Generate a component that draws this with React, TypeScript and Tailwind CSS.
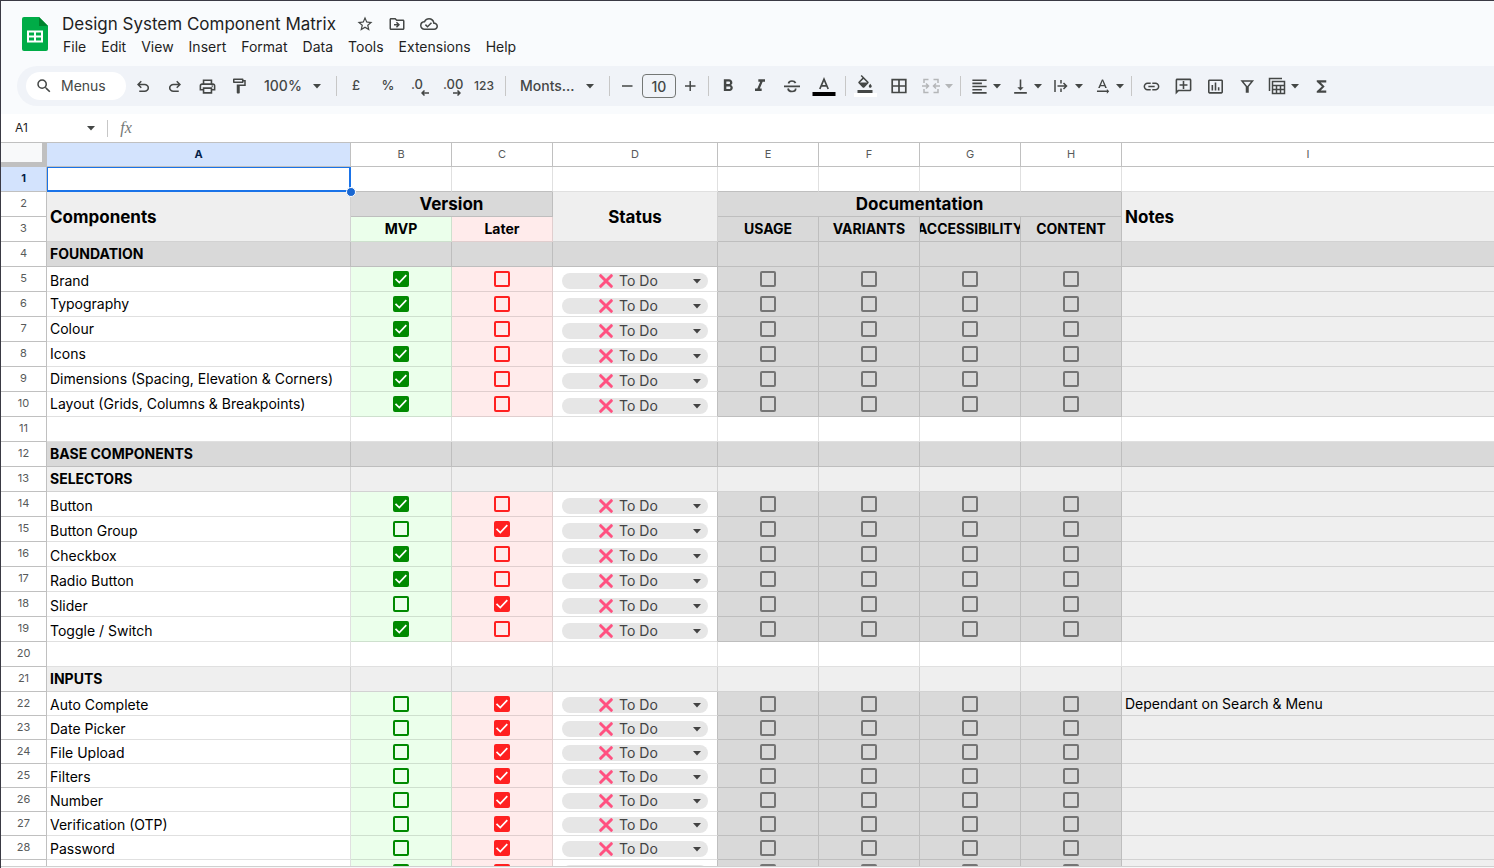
import type { ReactNode } from 'react';
import clsx from 'clsx';
import {
  MdFormatAlignLeft,
  MdFormatBold,
  MdFormatColorFill,
  MdFormatItalic,
  MdFunctions,
  MdInsertChartOutlined,
  MdLink,
  MdOutlineAddComment,
  MdOutlineCloudDone,
  MdOutlineDriveFileMove,
  MdOutlineFormatPaint,
  MdOutlinePrint,
  MdSearch,
  MdStarBorder,
  MdTextRotationNone,
  MdVerticalAlignBottom,
} from 'react-icons/md';

const MENUS = ['File', 'Edit', 'View', 'Insert', 'Format', 'Data', 'Tools', 'Extensions', 'Help'];
const COLUMNS = ['A', 'B', 'C', 'D', 'E', 'F', 'G', 'H', 'I'];
const DOC_COLUMNS = ['USAGE', 'VARIANTS', 'ACCESSIBILITY', 'CONTENT'];

type Row =
  | { kind: 'blank' }
  | { kind: 'section' | 'group'; name: string }
  | { kind: 'item'; name: string; version: 'mvp' | 'later'; middle?: boolean; short?: boolean; note?: string };

// sheet rows 4 and down
const ROWS: Row[] = [
  { kind: 'section', name: 'FOUNDATION' },
  { kind: 'item', name: 'Brand', version: 'mvp' },
  { kind: 'item', name: 'Typography', version: 'mvp', middle: true },
  { kind: 'item', name: 'Colour', version: 'mvp', middle: true },
  { kind: 'item', name: 'Icons', version: 'mvp', middle: true },
  { kind: 'item', name: 'Dimensions (Spacing, Elevation & Corners)', version: 'mvp', middle: true },
  { kind: 'item', name: 'Layout (Grids, Columns & Breakpoints)', version: 'mvp', middle: true },
  { kind: 'blank' },
  { kind: 'section', name: 'BASE COMPONENTS' },
  { kind: 'group', name: 'SELECTORS' },
  { kind: 'item', name: 'Button', version: 'mvp' },
  { kind: 'item', name: 'Button Group', version: 'later' },
  { kind: 'item', name: 'Checkbox', version: 'mvp' },
  { kind: 'item', name: 'Radio Button', version: 'mvp' },
  { kind: 'item', name: 'Slider', version: 'later' },
  { kind: 'item', name: 'Toggle / Switch', version: 'mvp' },
  { kind: 'blank' },
  { kind: 'group', name: 'INPUTS' },
  { kind: 'item', name: 'Auto Complete', version: 'later', short: true, note: 'Dependant on Search & Menu' },
  { kind: 'item', name: 'Date Picker', version: 'later', short: true },
  { kind: 'item', name: 'File Upload', version: 'later', short: true },
  { kind: 'item', name: 'Filters', version: 'later', short: true },
  { kind: 'item', name: 'Number', version: 'later', short: true },
  { kind: 'item', name: 'Verification (OTP)', version: 'later', short: true },
  { kind: 'item', name: 'Password', version: 'later', short: true },
  { kind: 'item', name: '', version: 'later', short: true },
];

const CELL = 'border-r border-b border-black/12 p-0';

function Caret({ className }: { className?: string }) {
  return (
    <svg width="10" height="5" viewBox="0 0 10 5" className={clsx('shrink-0', className)}>
      <path d="M1 0h8L5 4.5z" fill="currentColor" />
    </svg>
  );
}

function SheetsLogo() {
  return (
    <svg width="26" height="34" viewBox="0 0 26 34" className="shrink-0">
      <path d="M2 0h15l9 9v23a2 2 0 0 1-2 2H2a2 2 0 0 1-2-2V2a2 2 0 0 1 2-2z" fill="#00ac47" />
      <path d="M17 0l9 9h-9z" fill="#00832d" />
      <path d="M5 13.500h16v12H5zM7 15.500v3h5v-3zm7 0v3h5v-3zm-7 5v3h5v-3zm7 0v3h5v-3z" fill="#fff" fillRule="evenodd" />
    </svg>
  );
}

function SymbolIcon({ d }: { d: string }) {
  return (
    <svg width="18" height="18" viewBox="0 -1000 960 960" fill="currentColor">
      <path d={d} />
    </svg>
  );
}

function LineIcon({ children }: { children: ReactNode }) {
  return (
    <svg width="18" height="18" viewBox="0 0 18 18" fill="none" stroke="currentColor" strokeWidth="1.5">
      {children}
    </svg>
  );
}

function ToolButton({ label, className, children }: { label: string; className?: string; children: ReactNode }) {
  return (
    <button type="button" aria-label={label} className={clsx('flex h-7 shrink-0 items-center justify-center', className ?? 'w-8')}>
      {children}
    </button>
  );
}

function SplitButton({ label, className, children }: { label: string; className?: string; children: ReactNode }) {
  return (
    <button type="button" aria-label={label} className={clsx('flex h-7 w-[38px] shrink-0 items-center gap-[3px] pl-1', className)}>
      <span className="flex w-5 justify-center">{children}</span>
      <Caret />
    </button>
  );
}

function Separator() {
  return <span className="mr-[3px] ml-[5px] h-5 w-px shrink-0 bg-[#c7c7c7]" />;
}

function ToolSelect({ label, value, className }: { label: string; value: string; className?: string }) {
  return (
    <span className={clsx('relative flex h-7 shrink-0 items-center', className)}>
      <select aria-label={label} className="h-7 w-full appearance-none bg-transparent text-sm font-medium">
        <option>{value}</option>
      </select>
      <Caret className="pointer-events-none absolute right-[9px]" />
    </span>
  );
}

function DecimalIcon({ digits, right }: { digits: string; right?: boolean }) {
  return (
    <span className="relative flex h-5 w-[18px] items-start text-[13px] leading-4 font-medium">
      {digits}
      <svg width="8" height="6" viewBox="0 0 8 6" fill="none" stroke="currentColor" strokeWidth="1.500" className="absolute right-0 bottom-0">
        <path d={right ? 'M0 3h7M4.500 .5L7 3 4.500 5.500' : 'M8 3H1M3.500 .5L1 3l2.500 2.500'} />
      </svg>
    </span>
  );
}

function TitleBar() {
  return (
    <div className="flex items-start pt-[11px] pb-2 pl-[21px]">
      <span className="pt-[5px]">
        <SheetsLogo />
      </span>
      <div className="ml-[14px] flex flex-col">
        <div className="flex h-6 items-center">
          <h1 className="text-[17px] leading-6 whitespace-nowrap text-[#1f1f1f]">Design System Component Matrix</h1>
          <div className="ml-5 flex items-center gap-[14px] text-[#444746]">
            <button type="button" aria-label="Star"><MdStarBorder size={18} /></button>
            <button type="button" aria-label="Move"><MdOutlineDriveFileMove size={18} /></button>
            <button type="button" aria-label="Document status"><MdOutlineCloudDone size={18} /></button>
          </div>
        </div>
        <nav className="flex h-[22px] items-center gap-[15px] pl-px text-sm text-[#1f1f1f]">
          {MENUS.map(m => (
            <button key={m} type="button">{m}</button>
          ))}
        </nav>
      </div>
    </div>
  );
}

function Toolbar() {
  return (
    <div className="ml-4 flex h-10 items-center overflow-hidden rounded-l-full bg-[#f0f3f8] pl-[9px] text-[#444746]">
      <label className="mr-px flex h-7 w-[100px] shrink-0 items-center gap-2 rounded-full bg-white pl-[9px]">
        <MdSearch size={18} className="shrink-0" />
        <input aria-label="Menus" placeholder="Menus" className="w-14 bg-transparent text-sm outline-none placeholder:text-[#444746]" />
      </label>
      <ToolButton label="Undo">
        <SymbolIcon d="M280-200v-80h284q63 0 109.500-40T720-420q0-60-46.500-100T564-560H312l104 104-56 56-200-200 200-200 56 56-104 104h252q97 0 169 63t72 157q0 94-72 157t-169 63H280Z" />
      </ToolButton>
      <ToolButton label="Redo">
        <SymbolIcon d="M396-200q-97 0-169-63t-72-157q0-94 72-157t169-63h252L544-744l56-56 200 200-200 200-56-56 104-104H396q-63 0-109.500 40T240-420q0 60 46.500 100T396-280h284v80H396Z" />
      </ToolButton>
      <ToolButton label="Print"><MdOutlinePrint size={19} /></ToolButton>
      <ToolButton label="Paint format"><MdOutlineFormatPaint size={18} /></ToolButton>
      <ToolSelect label="Zoom" value="100%" className="w-[76px] pl-[9px]" />
      <Separator />
      <ToolButton label="Format as currency"><span className="text-[13px] font-medium">£</span></ToolButton>
      <ToolButton label="Format as percent"><span className="text-[13px] font-medium">%</span></ToolButton>
      <ToolButton label="Decrease decimal places"><DecimalIcon digits=".0" /></ToolButton>
      <ToolButton label="Increase decimal places"><DecimalIcon digits=".00" right /></ToolButton>
      <ToolButton label="More formats"><span className="text-xs font-medium">123</span></ToolButton>
      <Separator />
      <ToolSelect label="Font" value="Monts..." className="w-[95px] pl-[11px]" />
      <Separator />
      <ToolButton label="Decrease font size" className="w-7">
        <LineIcon><path d="M4 9h10.500" /></LineIcon>
      </ToolButton>
      <input
        aria-label="Font size"
        defaultValue="10"
        className="mx-px h-6 w-[34px] shrink-0 rounded border border-[#747775] bg-transparent text-center text-sm font-medium"
      />
      <ToolButton label="Increase font size" className="w-[26px]">
        <LineIcon><path d="M4 9h10.500M9.200 4v10" /></LineIcon>
      </ToolButton>
      <Separator />
      <ToolButton label="Bold"><MdFormatBold size={20} /></ToolButton>
      <ToolButton label="Italic"><MdFormatItalic size={20} /></ToolButton>
      <ToolButton label="Strikethrough">
        <LineIcon>
          <path d="M1 9.300h16M5.500 6.500C5.800 4.800 7.200 4 9 4s3 .8 3.600 2M5 11.500c.3 2 1.900 3 4 3s3.700-1.100 3.700-3" strokeWidth="1.700" />
        </LineIcon>
      </ToolButton>
      <ToolButton label="Text colour">
        <svg width="24" height="20" viewBox="0 0 24 20">
          <path d="M7.800 13L12 3.200 16.200 13M9.300 9.800h5.400" fill="none" stroke="currentColor" strokeWidth="1.700" />
          <path d="M.5 16h23v4H.5z" fill="#000" />
        </svg>
      </ToolButton>
      <Separator />
      <ToolButton label="Fill colour">
        <span className="flex flex-col items-center">
          <MdFormatColorFill size={18} />
          <span className="h-1 w-[23px] bg-white" />
        </span>
      </ToolButton>
      <ToolButton label="Borders" className="w-9">
        <LineIcon><path d="M2.200 2.700h13.600v12.800H2.200zM9 2.700v12.800M2.200 9h13.600" strokeWidth="1.700" /></LineIcon>
      </ToolButton>
      <SplitButton label="Merge cells" className="text-[#b4b6b8]">
        <LineIcon>
          <path d="M6.500 2.500H2V6M2 12v3.500h4.500M11.500 2.500H16V6M16 12v3.500h-4.500M0 9h6M4 6.500L6.500 9 4 11.500M18 9h-6M14 6.500L11.500 9l2.500 2.500" />
        </LineIcon>
      </SplitButton>
      <Separator />
      <div className="ml-px flex gap-[3px]">
        <SplitButton label="Horizontal align"><MdFormatAlignLeft size={19} /></SplitButton>
        <SplitButton label="Vertical align"><MdVerticalAlignBottom size={19} /></SplitButton>
        <SplitButton label="Text wrapping">
          <LineIcon><path d="M3 3v12M9 3v3.500M9 11.500V15M5.500 9h8.500M11.500 6L14.500 9l-3 3" /></LineIcon>
        </SplitButton>
        <SplitButton label="Text rotation"><MdTextRotationNone size={19} /></SplitButton>
      </div>
      <Separator />
      <ToolButton label="Insert link"><MdLink size={19} /></ToolButton>
      <ToolButton label="Insert comment"><MdOutlineAddComment size={19} className="-scale-x-100" /></ToolButton>
      <ToolButton label="Insert chart"><MdInsertChartOutlined size={19} /></ToolButton>
      <ToolButton label="Create a filter">
        <LineIcon><path d="M4 4h10.500L10 9.500V15H8.500V9.500z" /></LineIcon>
      </ToolButton>
      <SplitButton label="Table views">
        <LineIcon>
          <path d="M1.500 14V1.500H14M4.500 4.500h12v12h-12zM4.500 8.500h12M4.500 12.500h12M8.500 8.500v8M12.500 8.500v8" />
        </LineIcon>
      </SplitButton>
      <ToolButton label="Functions" className="ml-1 w-8"><MdFunctions size={19} /></ToolButton>
    </div>
  );
}

function FormulaBar() {
  return (
    <div className="flex h-[29px] shrink-0 items-center border-b border-[#c0c0c0] bg-white">
      <input aria-label="Name box" defaultValue="A1" className="w-[70px] pl-[14px] text-xs text-[#1f1f1f] outline-none" />
      <button type="button" aria-label="Named ranges" className="flex h-5 w-9 items-center justify-center pl-1 text-[#444746]">
        <Caret />
      </button>
      <span className="h-[17px] w-px bg-[#c7c7c7]" />
      <span className="w-9 text-center font-['Liberation_Serif',serif] text-base text-[#747775] italic">fx</span>
      <input aria-label="Formula" className="h-5 flex-1 outline-none" />
    </div>
  );
}

function CheckCell({ tone, checked, label }: { tone: 'green' | 'red' | 'grey'; checked?: boolean; label: string }) {
  return (
    <td
      className={clsx(
        CELL,
        tone === 'green' && 'bg-[#ebffeb]',
        tone === 'red' && 'bg-[#ffebeb]',
        tone === 'grey' && 'bg-[#d9d9d9]',
      )}
    >
      <span className="relative mx-auto flex size-4">
        <input
          type="checkbox"
          aria-label={label}
          defaultChecked={checked}
          className={clsx(
            'peer size-4 appearance-none rounded-[2px] border-2',
            tone === 'green' && 'border-[#008a00] checked:bg-[#008a00]',
            tone === 'red' && 'border-[#ff2020] checked:bg-[#ff2020]',
            tone === 'grey' && 'border-[#757575] checked:bg-[#757575]',
          )}
        />
        <svg width="16" height="16" viewBox="0 0 16 16" className="pointer-events-none absolute inset-0 hidden peer-checked:block">
          <path d="M2.500 7.800l3.800 3.700 7-7.300" fill="none" stroke="#fff" strokeWidth="1.700" />
        </svg>
      </span>
    </td>
  );
}

function StatusCell({ name }: { name: string }) {
  return (
    <td className="border-r border-b border-r-[#bfbfbf] border-b-black/12 bg-white px-[9px] pt-0 pb-[2px] align-bottom">
      <span className="relative block h-4">
        <select
          aria-label={`${name} status`}
          className="block h-4 w-full appearance-none rounded-full bg-[#e6e6e6] pl-[57px] text-sm leading-4 text-[#434343]"
        >
          <option>To Do</option>
        </select>
        <svg width="14" height="14" viewBox="0 0 14 14" className="pointer-events-none absolute top-px left-[37px]">
          <path d="M1.700 1.700l10.600 10.600M12.300 1.700L1.700 12.300" stroke="#ff5180" strokeWidth="3" strokeLinecap="round" />
        </svg>
        <Caret className="pointer-events-none absolute top-[6px] right-[6px] text-[#434343]" />
      </span>
    </td>
  );
}

function RowHeader({ n, active }: { n?: number; active?: boolean }) {
  return (
    <th
      scope="row"
      className={clsx(
        'border-r border-b border-[#c0c0c0] px-0 pt-0 pb-[2px] text-[11px] leading-4',
        active ? 'bg-[#d3e3fd] font-bold text-[#041e49]' : 'bg-white font-normal text-[#575a5a]',
      )}
    >
      {n}
    </th>
  );
}

function SheetRow({ n, row }: { n: number; row: Row }) {
  if (row.kind === 'item') {
    return (
      <tr className={row.short ? 'h-6' : 'h-[25px]'}>
        <RowHeader n={row.name ? n : undefined} />
        <td
          className={clsx(
            'border-r border-b border-black/12 bg-white pt-0 pr-0 pl-[3px] text-sm leading-[18px] whitespace-nowrap',
            row.middle ? 'pb-0 align-middle' : 'pb-px align-bottom',
          )}
        >
          {row.name}
        </td>
        <CheckCell tone="green" checked={row.version === 'mvp'} label={`${row.name} MVP`} />
        <CheckCell tone="red" checked={row.version === 'later'} label={`${row.name} Later`} />
        <StatusCell name={row.name} />
        {DOC_COLUMNS.map(c => (
          <CheckCell key={c} tone="grey" label={`${row.name} ${c}`} />
        ))}
        <td className={clsx(CELL, 'bg-[#efefef] pl-[3px] text-sm leading-[18px] whitespace-nowrap')}>{row.note}</td>
      </tr>
    );
  }

  const bg = row.kind === 'section' ? 'bg-[#d9d9d9]' : row.kind === 'group' ? 'bg-[#efefef]' : 'bg-white';
  return (
    <tr className="h-[25px]">
      <RowHeader n={n} />
      {COLUMNS.map(c => (
        <td key={c} className={clsx(CELL, bg, 'pl-[3px] text-sm leading-[18px] font-bold whitespace-nowrap')}>
          {c === 'A' && row.kind !== 'blank' ? row.name : null}
        </td>
      ))}
    </tr>
  );
}

function Sheet() {
  return (
    // one pixel wider than the window, so the last column shows no right border
    <table className="w-[calc(100%+1px)] table-fixed border-separate border-spacing-0 text-black">
      <colgroup>
        <col className="w-[46px]" />
        <col className="w-[304px]" />
        <col className="w-[101px]" />
        <col className="w-[101px]" />
        <col className="w-[165px]" />
        <col className="w-[101px]" />
        <col className="w-[101px]" />
        <col className="w-[101px]" />
        <col className="w-[101px]" />
        <col />
      </colgroup>
      <thead>
        <tr className="h-6">
          <td className="border-r-[5px] border-b-[5px] border-[#c0c0c0] bg-[#f8f9fa] p-0" />
          {COLUMNS.map(c => (
            <th
              key={c}
              scope="col"
              className={clsx(
                'border-r border-b border-[#c0c0c0] px-0 pt-0 pb-px text-[11px] leading-4',
                c === 'A' ? 'bg-[#d3e3fd] font-bold text-[#041e49]' : 'bg-white font-normal text-[#575a5a]',
              )}
            >
              {c}
            </th>
          ))}
        </tr>
      </thead>
      <tbody>
        <tr className="h-[25px]">
          <RowHeader n={1} active />
          {COLUMNS.map(c => (
            <td
              key={c}
              className={clsx(
                'relative border-r border-b border-r-black/12 bg-white p-0',
                c === 'D' || c === 'I' ? 'border-b-black/12' : 'border-b-[#bfbfbf]',
              )}
            >
              {c === 'A' && (
                <span className="absolute top-0 -right-px -bottom-px left-0 z-10 border-t border-r-2 border-b-2 border-l border-[#1a73e8]">
                  <span className="absolute -right-[7px] -bottom-[7px] size-[10px] rounded-full border border-white bg-[#1967d2]" />
                </span>
              )}
            </td>
          ))}
        </tr>
        <tr className="h-[25px] text-[17px] leading-5 font-bold">
          <RowHeader n={2} />
          <td rowSpan={2} className={clsx(CELL, 'bg-[#efefef] pl-[3px]')}>Components</td>
          <td colSpan={2} className={clsx(CELL, 'bg-[#d9d9d9] text-center')}>Version</td>
          <td rowSpan={2} className={clsx(CELL, 'bg-[#efefef] text-center')}>Status</td>
          <td colSpan={4} className={clsx(CELL, 'bg-[#d9d9d9] text-center')}>Documentation</td>
          <td rowSpan={2} className={clsx(CELL, 'bg-[#efefef] pl-[3px]')}>Notes</td>
        </tr>
        <tr className="h-[25px] text-sm leading-[18px] font-bold">
          <RowHeader n={3} />
          <td className={clsx(CELL, 'bg-[#ebffeb] text-center')}>MVP</td>
          <td className={clsx(CELL, 'bg-[#ffebeb] text-center')}>Later</td>
          {DOC_COLUMNS.map(c => (
            <td key={c} className={clsx(CELL, 'bg-[#d9d9d9]')}>
              <span className="flex justify-center overflow-hidden">{c}</span>
            </td>
          ))}
        </tr>
        {ROWS.map((row, i) => (
          <SheetRow key={i} n={i + 4} row={row} />
        ))}
      </tbody>
    </table>
  );
}

export default function App() {
  return (
    <div className="flex h-screen flex-col overflow-hidden border-t border-l border-[#3a3a44] bg-white font-['Inter',sans-serif]">
      <header className="shrink-0 bg-[#f9fbfd] pb-2">
        <TitleBar />
        <Toolbar />
      </header>
      <FormulaBar />
      <main className="min-h-0 flex-1 overflow-hidden">
        <Sheet />
      </main>
      <footer className="h-[2px] shrink-0 border-t border-[#d0d0d0] bg-[#f8f9fa]" />
    </div>
  );
}
